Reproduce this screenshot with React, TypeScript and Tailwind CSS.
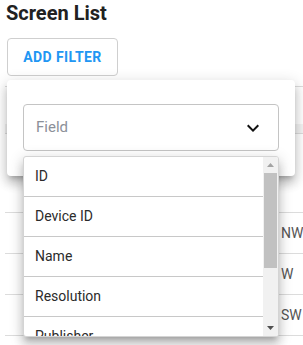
const fields = ["ID", "Device ID", "Name", "Resolution", "Publisher", "Status"];

const rows = ["NW", "W", "SW", ""];

const paperShadow =
  "shadow-[0_5px_5px_-3px_rgba(0,0,0,0.2),0_8px_10px_1px_rgba(0,0,0,0.14),0_3px_14px_2px_rgba(0,0,0,0.12)]";

const App = () => {
  return (
    <div className="relative h-[345px] w-[303px] overflow-hidden bg-white font-['Roboto',sans-serif]">
      <div className="px-[7px]">
        <h1 className="-ml-px text-[20px] leading-[26px] font-bold text-[#212121]">
          Screen List
        </h1>
        <button className="mt-[12px] h-[38px] w-[111px] rounded-[4px] border border-[#cfcfcf] text-[14px] font-bold tracking-[0.4px] text-[#2196f3]">
          ADD FILTER
        </button>
      </div>

      {/* table behind the popover */}
      <div className="mt-[10px] ml-[5px]">
        <div className="h-[38px] border-t border-[#dcdcdc]" />
        <div className="h-[10px] border-b border-[#dcdcdc] bg-[#f3f3f3]" />
        <div className="h-[79px] border-b border-[#dcdcdc]" />
        {rows.map((dir, i) => (
          <div
            key={i}
            className="flex h-[41px] items-center border-b border-[#dcdcdc] pl-[276px] text-[14px] text-[#555]"
          >
            {dir}
          </div>
        ))}
      </div>

      {/* filter popover */}
      <div
        className={`absolute top-[80px] left-[7px] h-[96px] w-[288px] rounded-[4px] bg-white px-[16px] pt-[24px] ${paperShadow}`}
      >
        <div className="flex h-[47px] items-center justify-between rounded-[4px] border border-[#c4c4c4] pr-[13px] pl-[12px]">
          <span className="text-[15px] text-[#8c9099]">Field</span>
          <svg width="24" height="24" viewBox="0 0 24 24" fill="#111">
            <path d="M7.41 8.59 12 13.17l4.59-4.58L18 10l-6 6-6-6 1.41-1.41z" />
          </svg>
        </div>
      </div>

      {/* open listbox */}
      <div
        className={`absolute top-[156px] left-[23px] flex h-[181px] w-[256px] overflow-hidden rounded-[3px] border border-[#d4d4d4] bg-white ${paperShadow}`}
      >
        <div className="flex-1">
          {fields.map((f) => (
            <div
              key={f}
              className="flex h-[40px] items-center border-b border-[#c8c8c8] pl-[11px] text-[14px] text-[#2b2b2b]"
            >
              {f}
            </div>
          ))}
        </div>
        <div className="flex w-[15px] flex-col bg-[#f1f1f1]">
          <div className="flex h-[16px] items-center justify-center">
            <svg width="7" height="4" viewBox="0 0 7 4" fill="#a3a3a3">
              <path d="M0 4 3.5 0 7 4z" />
            </svg>
          </div>
          <div className="mx-px h-[95px] bg-[#c1c1c1]" />
          <div className="flex-1" />
          <div className="flex h-[16px] items-center justify-center">
            <svg width="7" height="4" viewBox="0 0 7 4" fill="#505050">
              <path d="M0 0h7L3.5 4z" />
            </svg>
          </div>
        </div>
      </div>
    </div>
  );
};

export default App;
